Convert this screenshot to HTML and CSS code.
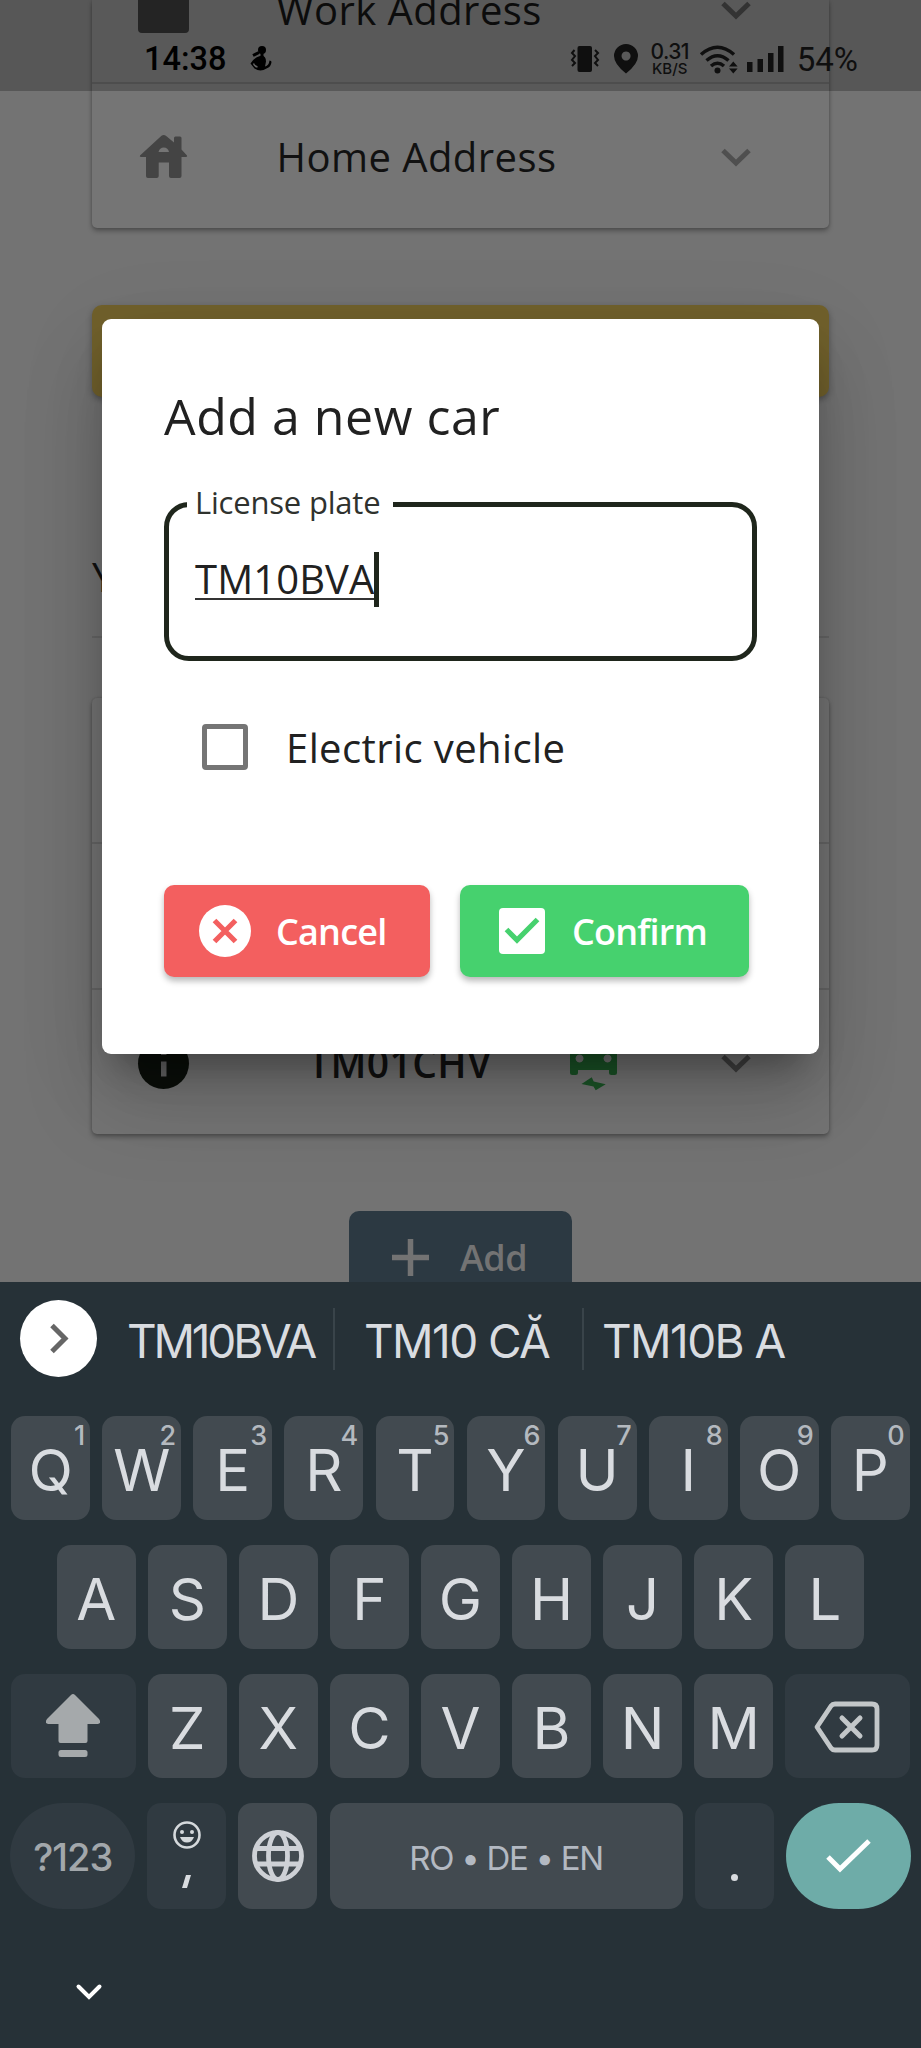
FILE: index.html
```
<!DOCTYPE html>
<html lang="en">
<head>
<meta charset="utf-8">
<title>Add a new car</title>
<link rel="stylesheet" href="styles.css">
</head>
<body>
<div class="screen">
  <main class="app">
    <section class="card card-addresses">
      <div class="row row-work">
        <span class="work-icon"></span>
        <span class="row-label">Work Address</span>
        <svg class="chevron" width="30" height="20" viewBox="0 0 30 20"><path d="M2 3.5 15 16 28 3.5" fill="none" stroke="#434343" stroke-width="5"/></svg>
      </div>
      <div class="row">
        <svg class="row-icon" width="51" height="48" viewBox="0 0 51 48"><path fill="#444" fill-rule="evenodd" d="M23.500 2.800q2.200-1.800 4.400 0L36 9.500V5q0-1.500 1.500-1.500h4.500q1.500 0 1.500 1.500v11.500L49 22.500q.8 1.300-1 1.500h-4.500v19q0 2-2 2H33q-2 0-2-2V29.500H20.700V43q0 2-2 2H10q-2 0-2-2V24H3q-1.800-.2-1-1.500zM20.500 19h10.500q-1-4.500-5.200-4.500T20.500 19z"/></svg>
        <span class="row-label">Home Address</span>
        <svg class="chevron" width="30" height="20" viewBox="0 0 30 20"><path d="M2 3.500 15 16 28 3.500" fill="none" stroke="#4f4f4f" stroke-width="5"/></svg>
      </div>
    </section>
    <div class="yellow-button"></div>
    <h2 class="section-title">Y</h2>
    <section class="card card-cars">
      <div class="row"></div>
      <div class="row"></div>
      <div class="row">
        <svg class="row-icon" width="51" height="51" viewBox="0 0 51 51"><circle cx="25.500" cy="25.500" r="25.500" fill="#0b0f0a"/><path d="M23 23.500h5.500v15H23zM23 12h5.500v5H23z" fill="#666"/></svg>
        <span class="row-label plate">TM01CHV</span>
        <svg class="car-icon" width="47" height="60" viewBox="0 0 47 60"><path fill="#1b5528" fill-rule="evenodd" d="M0 22 5 7q1.500-4 5-4h27q3.500 0 5 4l5 15v20.500q0 2.500-2.500 2.500h-3q-2.500 0-2.500-2.500v-2.500H8v2.500q0 2.500-2.500 2.500h-3Q0 45 0 42.500zM9.500 24.500a4 4 0 1 0 .1 0zM37.500 24.500a4 4 0 1 0 .1 0z"/><path fill="#1b5528" d="M11.500 54 21.700 47.300 23.700 51.500 35.700 54.300 25.700 60.300 23.500 56.500z"/></svg>
        <svg class="chevron" width="30" height="20" viewBox="0 0 30 20"><path d="M2 3.500 15 16 28 3.500" fill="none" stroke="#414141" stroke-width="5"/></svg>
      </div>
    </section>
    <div class="add-button">
      <svg width="37" height="37" viewBox="0 0 37 37"><path d="M18.500 0v37M0 18.500h37" stroke="#737373" stroke-width="5.500"/></svg>
      <span>Add</span>
    </div>

    <div class="status-bar">
      <span class="clock">14:38</span>
      <svg class="notif" width="22" height="26" viewBox="0 0 22 26"><circle cx="12" cy="4" r="4" fill="#000"/><path d="M3 9.500 9 6.500M12 6v7" stroke="#000" stroke-width="3"/><path d="M10 10q6-1 6 5.500l-1 5q4-1 4.500-6 2 0 2 1.500-.5 5-5 6.500-6 4-12 0L.5 17.500q3-5.500 9.500-7.500z" fill="#000"/><path d="M3.500 17.500q1 3 4 3.500" stroke="#666" stroke-width="1.500" fill="none"/></svg>
      <svg class="vibrate" width="28" height="27" viewBox="0 0 28 27"><rect x="6.500" y="0" width="14.500" height="26" rx="2" fill="#0f0f0f"/><path d="M3.500 4 1 7l3 3-3 4 3 3-3 3M24 4l3 3-3 3 3 4-3 3 3 3" fill="none" stroke="#0f0f0f" stroke-width="2"/></svg>
      <svg class="pin" width="24" height="30" viewBox="0 0 24 30"><path fill="#0f0f0f" fill-rule="evenodd" d="M12 0a12 12 0 0 1 12 12q0 8-12 17.500Q0 20 0 12A12 12 0 0 1 12 0zm0 7.500a4.500 4.500 0 1 0 .1 0z"/></svg>
      <span class="net"><b>0.31</b><i>KB/S</i></span>
      <svg class="wifi" width="38" height="29" viewBox="0 0 38 29"><path d="M1 9.500Q17.500-5 34 9.500M6.500 15.500q11-9.500 22 0M11 21q6.500-5.500 13 0" fill="none" stroke="#0f0f0f" stroke-width="3.500"/><circle cx="17.500" cy="25.500" r="3" fill="#0f0f0f"/><path d="M29 21.500 33.300 16.500l4.300 5zM29 23.500l4.300 5 4.300-5z" fill="#0f0f0f"/></svg>
      <svg class="signal" width="37" height="26" viewBox="0 0 37 26"><path d="M0 16h5.500v10H0zM10.500 13H16v13h-5.500zM21 7h5.500v19H21zM31 0h5.500v26H31z" fill="#0f0f0f"/></svg>
      <span class="battery">54%</span>
    </div>

    <div class="dialog">
      <h1 class="dialog-title">Add a new car</h1>
      <div class="field">
        <span class="field-label">License plate</span>
        <span class="field-value">TM10BVA</span><span class="caret"></span>
      </div>
      <label class="check"><span class="box"></span><span class="check-text">Electric vehicle</span></label>
      <div class="actions">
        <div class="btn btn-cancel">
          <svg width="52" height="52" viewBox="0 0 52 52"><circle cx="26" cy="26" r="26" fill="#fff"/><path d="M15.500 15.500l21 21m0-21l-21 21" stroke="#f35f5f" stroke-width="5.200"/></svg>
          <span>Cancel</span>
        </div>
        <div class="btn btn-confirm">
          <svg width="46" height="46" viewBox="0 0 46 46"><rect width="46" height="46" rx="4" fill="#fff"/><path d="M7.500 21.500 18 32 38.500 11.500" fill="none" stroke="#46d16e" stroke-width="5.200"/></svg>
          <span>Confirm</span>
        </div>
      </div>
    </div>
  </main>

  <section class="keyboard">
    <div class="suggestions">
      <svg class="expand" width="77" height="77" viewBox="0 0 77 77"><circle cx="38.500" cy="38.500" r="38.500" fill="#fff"/><path d="M32 25.500 45 38.500 32 51.500" fill="none" stroke="#666" stroke-width="5"/></svg>
      <span class="suggestion s1">TM10BVA</span>
      <span class="suggestion s2">TM10 CĂ</span>
      <span class="suggestion s3">TM10B A</span>
    </div>
    <div class="keys">
      <div class="key-row">
        <div class="key">Q<sup>1</sup></div><div class="key">W<sup>2</sup></div><div class="key">E<sup>3</sup></div><div class="key">R<sup>4</sup></div><div class="key">T<sup>5</sup></div><div class="key">Y<sup>6</sup></div><div class="key">U<sup>7</sup></div><div class="key">I<sup>8</sup></div><div class="key">O<sup>9</sup></div><div class="key">P<sup>0</sup></div>
      </div>
      <div class="key-row">
        <div class="key">A</div><div class="key">S</div><div class="key">D</div><div class="key">F</div><div class="key">G</div><div class="key">H</div><div class="key">J</div><div class="key">K</div><div class="key">L</div>
      </div>
      <div class="key-row">
        <div class="key wide dark"><svg width="54" height="63" viewBox="0 0 54 63"><path fill="#a5a9ab" d="M25 1q2-1.800 4 0L53 25q1.500 1.500 1 4l-2 1H41.500v17q0 2-2 2h-25q-2 0-2-2V30H2L0 29q-.5-2.500 1-4z"/><rect x="12.500" y="56" width="29" height="7" rx="2.500" fill="#a5a9ab"/></svg></div>
        <div class="key">Z</div><div class="key">X</div><div class="key">C</div><div class="key">V</div><div class="key">B</div><div class="key">N</div><div class="key">M</div>
        <div class="key wide dark backspace"><svg width="66" height="52" viewBox="0 0 66 52"><path d="M21 3h37q5 0 5 5v36q0 5-5 5H21q-2.500 0-4-2L3 26 17 5q1.500-2 4-2z" fill="none" stroke="#c3c7c9" stroke-width="4.800" stroke-linejoin="round"/><path d="M28 17l18 18m0-18L28 35" stroke="#c3c7c9" stroke-width="5" stroke-linecap="round"/></svg></div>
      </div>
      <div class="key-row last">
        <div class="key wide dark round symbols">?123</div>
        <div class="key dark comma"><svg width="28" height="28" viewBox="0 0 28 28"><circle cx="14" cy="14" r="12.500" fill="none" stroke="#d5d9dc" stroke-width="2.600"/><circle cx="9" cy="11" r="2" fill="#d5d9dc"/><circle cx="19" cy="11" r="2" fill="#d5d9dc"/><path d="M7 16h14q-2 5.500-7 5.500T7 16z" fill="#d5d9dc"/></svg><svg width="9" height="13" viewBox="0 0 9 13"><path d="M4 0h5L5 13H0z" fill="#d9dce0"/></svg></div>
        <div class="key globe"><svg width="52" height="52" viewBox="0 0 52 52"><g fill="none" stroke="#ced1d6" stroke-width="4.800"><circle cx="26" cy="26" r="23.500"/><ellipse cx="26" cy="26" rx="9.500" ry="23.500"/><path d="M4 18.500h44M4 34h44"/></g></svg></div>
        <div class="key space">RO • DE • EN</div>
        <div class="key dark dot"><span></span></div>
        <div class="key wide round enter"><svg width="45" height="34" viewBox="0 0 45 34"><path d="M2 18 14 30 43 2" fill="none" stroke="#fff" stroke-width="5"/></svg></div>
      </div>
    </div>
    <div class="nav"><svg width="26" height="17" viewBox="0 0 26 17"><path d="M2.500 2.500 13 13 23.500 2.500" fill="none" stroke="#fff" stroke-width="4" stroke-linecap="round"/></svg></div>
  </section>
</div>
</body>
</html>
```
FILE: styles.css
```
* { box-sizing: border-box; }
body { margin: 0; font-family: "Open Sans", "Noto Sans", sans-serif; }
h1, h2 { margin: 0; font-weight: 400; }
svg { display: block; flex: none; overflow: visible; }
.screen { width: 921px; height: 2048px; display: flex; flex-direction: column; overflow: hidden; }

/* dimmed page behind the dialog */
.app { position: relative; height: 1282px; padding: 0 92px; background: #737373; overflow: hidden; display: flex; flex-direction: column; }
.card { flex: none; background: #757575; border-radius: 0 0 5px 5px; box-shadow: 0 3px 5px rgba(0,0,0,.3), 0 0 3px rgba(0,0,0,.16); }
.row { height: 146px; display: flex; align-items: center; padding: 0 78px 0 46px; border-bottom: 2px solid #666; }
.row:last-child { border-bottom: 0; }
.row-icon { width: 51px; }
.row-label { margin-left: 87.500px; font-size: 40px; line-height: 54px; color: #111; white-space: nowrap; letter-spacing: .45px; }
.chevron { margin-left: auto; }
.row-work { height: 84px; align-items: flex-start; }
.work-icon { width: 51px; height: 33px; background: #303030; border-radius: 0 0 4px 4px; }
.row-work .row-label { margin-top: -17px; }
.row-work .chevron { margin-top: 0; }
.card-addresses { height: 228px; }
.yellow-button { flex: none; height: 92px; margin-top: 77px; border-radius: 10px; background: #71612c; box-shadow: 0 3px 6px rgba(0,0,0,.3); }
.section-title { flex: none; margin-top: 99px; height: 142px; padding-top: 54px; font-size: 40px; line-height: 54px; color: #111; border-bottom: 2px solid #666; }
.card-cars { height: 436px; margin-top: 60px; border-radius: 5px; }
.plate { margin-left: 119px; font-weight: 600; font-size: 39px; letter-spacing: .4px; }
.car-icon { position: absolute; left: 570px; top: 1030px; }
.add-button { flex: none; align-self: center; width: 223px; height: 92px; margin-top: 77px; border-radius: 10px; background: #2c3942; display: flex; align-items: center; padding-left: 43px; gap: 31px; font-size: 36px; font-weight: 600; letter-spacing: -.5px; color: #737373; }

.status-bar { position: absolute; inset: 0 0 auto 0; height: 91px; padding: 27px 63px 0 144px; display: flex; align-items: center; background: rgba(0,0,0,.24); font-family: Roboto, sans-serif; color: #0f0f0f; }
.clock { font-size: 32.500px; font-weight: 500; color: #000; }
.notif { margin-left: 24px; }
.vibrate { margin-left: auto; }
.pin { margin-left: 15px; }
.net { margin-left: 12px; width: 40px; display: flex; flex-direction: column; align-items: center; }
.net b { font: 500 21px/18px Inter, sans-serif; letter-spacing: -.6px; }
.net i { font: 500 15px/15px Inter, sans-serif; }
.wifi { margin-left: 10px; }
.signal { margin-left: 9px; }
.battery { margin-left: 13px; font-size: 33px; }

.dialog { position: absolute; left: 102px; top: 319px; width: 717px; height: 735px; padding: 62px; background: #fff; border-radius: 9px; box-shadow: 0 25px 34px -16px rgba(0,0,0,.35), 0 50px 80px 6px rgba(0,0,0,.13), 0 18px 90px 4px rgba(0,0,0,.08); }
.dialog-title { font-size: 50px; line-height: 70px; color: #212121; letter-spacing: .55px; white-space: nowrap; }
.field { position: relative; height: 159px; margin-top: 51px; border: 5px solid #1f261c; border-radius: 25px; padding: 45px 0 0 26px; display: flex; }
.field-label { position: absolute; left: 18px; top: -26px; width: 206px; padding-left: 8px; background: #fff; font-size: 31px; letter-spacing: -.2px; line-height: 42px; color: #2f322e; white-space: nowrap; }
.field-value { font-size: 40px; height: 48px; line-height: 54px; color: #212121; border-bottom: 2px solid #333; letter-spacing: .1px; }
.caret { width: 5px; height: 55px; background: #1f261c; }
.check { display: flex; align-items: center; margin: 63px 0 0 38px; height: 46px; }
.box { width: 46px; height: 46px; border: 5px solid #757575; border-radius: 4px; }
.check-text { margin: 1px 0 0 38px; font-size: 40px; color: #212121; white-space: nowrap; letter-spacing: .4px; }
.actions { display: flex; gap: 30px; margin-top: 115px; }
.btn { height: 92px; border-radius: 10px; display: flex; align-items: center; font-size: 36px; font-weight: 600; color: #fff; box-shadow: 0 4px 6px rgba(0,0,0,.28); letter-spacing: -.8px; }
.btn-cancel { width: 266px; background: #f35f5f; padding-left: 35px; gap: 25px; }
.btn-confirm { width: 289px; background: #46d16e; padding-left: 39px; gap: 27px; }

.keyboard { height: 766px; background: #263137; font-family: Inter, Roboto, sans-serif; color: #d9dce0; }
.suggestions { height: 134px; padding: 18px 0 0 20px; display: flex; align-items: flex-start; }
.suggestion { margin-top: 8px; height: 62px; line-height: 66px; font-size: 46px; letter-spacing: -1.600px; white-space: nowrap; }
.s1 { width: 238px; padding-left: 30px; border-right: 2px solid #39444a; letter-spacing: -3.200px; }
.s2 { width: 249px; padding-left: 29px; border-right: 2px solid #39444a; }
.s3 { padding-left: 18px; }
.keys { display: flex; flex-direction: column; gap: 25.500px; }
.key-row { display: flex; justify-content: center; gap: 12.200px; height: 103.500px; }
.key-row.last { height: 106px; }
.key { position: relative; width: 78.900px; border-radius: 14px; background: #424a50; display: flex; align-items: center; justify-content: center; font-size: 58px; padding-top: 5px; }
.key sup { position: absolute; right: 5px; top: 8px; font-size: 27px; line-height: 24px; color: #b4b9bf; font-weight: 500; }
.wide { width: 125px; padding-top: 0; }
.backspace { padding-right: 2px; padding-top: 2px; }
.dark { background: #303a41; }
.round { border-radius: 53px; }
.symbols { font-size: 38px; font-weight: 500; color: #a2a7ab; letter-spacing: -1px; padding-top: 2px; }
.comma { flex-direction: column; justify-content: flex-start; padding-top: 18px; gap: 26px; }
.globe { padding-top: 0; }
.space { width: 353px; font-size: 33px; color: #b3b9c2; letter-spacing: -1.300px; padding-top: 3px; }
.dot { align-items: flex-start; padding-top: 71px; }
.dot span { width: 7px; height: 7px; border-radius: 50%; background: #d9dce0; }
.enter { background: #6eaca8; }
.nav { padding: 75px 0 0 76px; }
```
